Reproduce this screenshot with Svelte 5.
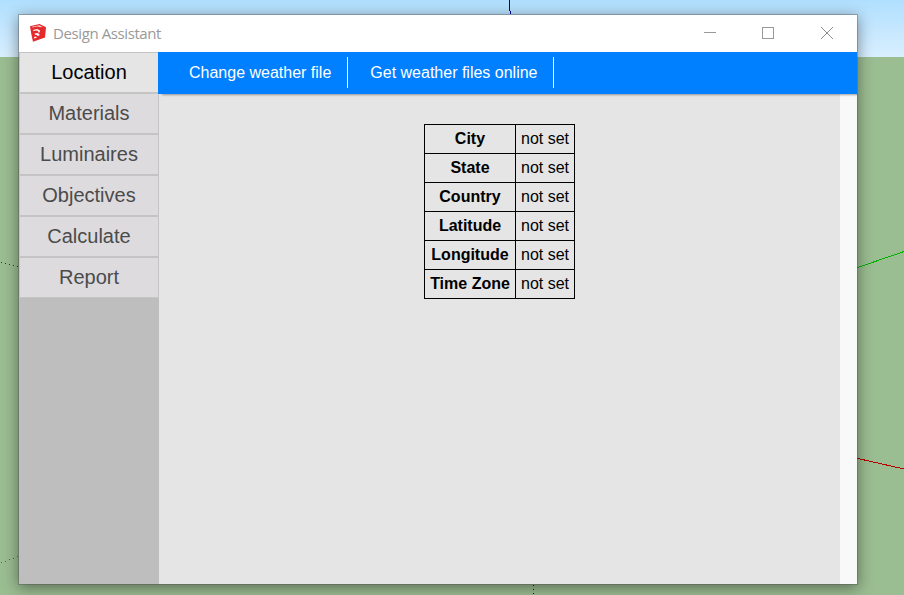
<script>
  const tabs = ['Location', 'Materials', 'Luminaires', 'Objectives', 'Calculate', 'Report'];
  const fields = ['City', 'State', 'Country', 'Latitude', 'Longitude', 'Time Zone'];
  const actions = ['Change weather file', 'Get weather files online'];
  let active = $state('Location');
</script>

<div class="desktop">
  <svg class="axes" width="904" height="595" shape-rendering="crispEdges" fill="none" aria-hidden="true">
    <path d="M509.5 0V11M510.5 11V14" stroke="#00009a" />
    <path d="M857 267.7L904 251.5" stroke="#00b400" />
    <path d="M857 458.3L904 469" stroke="#b40000" />
    <g fill="#a00000">
      <rect x="1" y="262" width="1" height="1" /><rect x="5" y="263" width="1" height="1" />
      <rect x="9" y="264" width="1" height="1" /><rect x="13" y="265" width="1" height="1" />
      <rect x="17" y="266" width="1" height="1" />
    </g>
    <g fill="#00a000">
      <rect x="1" y="562" width="1" height="1" /><rect x="5" y="561" width="1" height="1" />
      <rect x="9" y="559" width="1" height="1" /><rect x="13" y="558" width="1" height="1" />
      <rect x="17" y="556" width="1" height="1" />
    </g>
  </svg>

  <div class="window">
    <header class="titlebar">
      <svg class="logo" width="18" height="20" viewBox="0 0 18 20" aria-hidden="true">
        <path d="M1 3.2L10.5 1L17 4.2L16 14.6L4 18.7L2.4 11.5Z" fill="#e52a2c" />
        <path d="M3 3.8L10.3 2.2L13.6 3.9L12 4.3L8 3.4L3.5 4.6Z" fill="#fff" opacity=".75" />
        <path d="M4 7L8 6.1L10.8 7.2V9.2L9.2 9.5V8.1L7 7.6L4.4 8.1ZM5.6 10.6L8.2 10.1L10.4 11V12.5L8.2 12.9V12L5.8 11.6ZM5 14L7.2 13.5L7.7 14.8L5.3 15.4Z" fill="#fff" />
      </svg>
      <span class="title">Design Assistant</span>
      <div class="controls">
        <svg width="12" height="12" shape-rendering="crispEdges" aria-label="Minimize"><path d="M0 5.5H12" stroke="#999" /></svg>
        <svg width="12" height="12" shape-rendering="crispEdges" aria-label="Maximize"><path d="M.5 .5H11.5V11.5H.5Z" fill="none" stroke="#999" /></svg>
        <svg width="12" height="12" aria-label="Close"><path d="M0 0L12 12M12 0L0 12" stroke="#8d8d8d" /></svg>
      </div>
    </header>

    <div class="body">
      <nav class="tabs">
        {#each tabs as tab}
          <button class:active={active === tab} onclick={() => (active = tab)}>{tab}</button>
        {/each}
      </nav>
      <main>
        <div class="toolbar">
          {#each actions as action}
            <a href="#top">{action}</a>
          {/each}
        </div>
        <div class="pane">
          <div class="content">
            <table>
              <tbody>
                {#each fields as field}
                  <tr><th>{field}</th><td>not set</td></tr>
                {/each}
              </tbody>
            </table>
          </div>
          <div class="scroll"></div>
        </div>
      </main>
    </div>
  </div>

  <svg class="axis-below" width="1" height="11" shape-rendering="crispEdges" fill="#00009a" aria-hidden="true">
    <rect y="1" width="1" height="1" /><rect y="5" width="1" height="1" /><rect y="9" width="1" height="1" />
  </svg>
</div>

<style>
  .desktop {
    position: relative;
    width: 904px;
    height: 595px;
    box-sizing: border-box;
    padding: 14px 0 0 18px;
    overflow: hidden;
    background: linear-gradient(#b0dffe 0, #d9efff 57px, #9bbd92 57px);
    font-family: "Liberation Sans", Arial, sans-serif;
  }
  .axes { position: absolute; left: 0; top: 0; }
  .axis-below { position: absolute; left: 533px; top: 584px; }
  .window {
    position: relative;
    display: flex;
    flex-direction: column;
    box-sizing: border-box;
    width: 840px;
    height: 571px;
    border: 1px solid rgba(85, 85, 85, .4);
    background: #fff;
    background-clip: padding-box;
    box-shadow: 0 3px 14px rgba(0, 0, 0, .42);
  }
  .titlebar {
    display: flex;
    align-items: center;
    height: 37px;
    flex: none;
    box-sizing: border-box;
    padding: 0 24px 1px 10px;
  }
  .logo { flex: none; margin-right: 6px; }
  .title {
    flex: 1;
    font: 15px/20px "Open Sans", "Noto Sans", sans-serif;
    letter-spacing: -.4px;
    color: #999;
    white-space: nowrap;
  }
  .controls { display: flex; gap: 46px; }
  .controls svg { display: block; }
  .controls svg:last-child { margin-left: 1px; }
  .body { display: flex; flex: 1; min-height: 0; }
  .tabs {
    display: flex;
    flex-direction: column;
    flex: none;
    width: 140px;
    background: #bebebe;
  }
  button {
    height: 41px;
    box-sizing: border-box;
    padding: 0 0 1px;
    border: 1px solid #c5c4c5;
    background: #dddbde;
    color: #4b4b4b;
    font: 20px/38px "Liberation Sans", Arial, sans-serif;
  }
  button.active { background: #e5e5e5; color: #000; }
  main {
    display: flex;
    flex-direction: column;
    flex: 1;
    min-width: 0;
    clip-path: inset(0 0 0 -1px);
  }
  .toolbar {
    position: relative;
    display: flex;
    align-items: center;
    flex: none;
    height: 42px;
    box-sizing: border-box;
    margin-left: -1px;
    padding: 0 0 1px 9px;
    background: #0080ff;
    box-shadow: 3px 2px 2px -1px rgba(0, 0, 0, .36);
  }
  a {
    height: 31px;
    padding: 0 16px 0 22px;
    border-right: 1px solid #fff;
    color: #fff;
    font-size: 16px;
    line-height: 31px;
    text-decoration: none;
  }
  a + a { padding-right: 15px; }
  .pane { display: flex; flex: 1; min-height: 0; }
  .content { flex: 1; padding-top: 30px; background: #e5e5e5; }
  .scroll { width: 17px; background: #f9f9f9; }
  table { margin: 0 auto; border-collapse: collapse; font-size: 16px; line-height: 18px; color: #000; }
  th, td { height: 18px; padding: 5px; border: 1px solid #000; }
  th { width: 80px; }
  td { width: 48px; white-space: nowrap; }
</style>
